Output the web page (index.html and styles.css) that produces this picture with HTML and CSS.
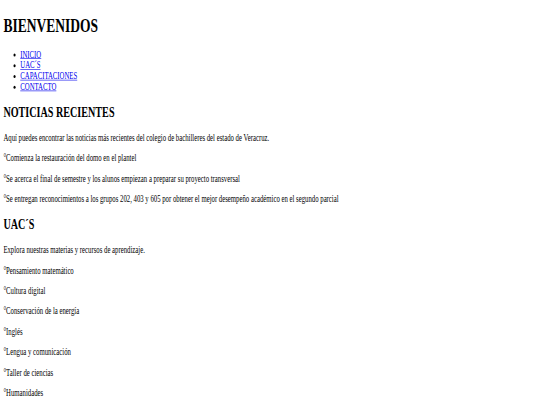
FILE: index.html
```html
<!DOCTYPE html>
<html lang="es">
<head>
<meta charset="utf-8">
<title>Bienvenidos</title>
<link rel="stylesheet" href="styles.css">
</head>
<body>
<div class="page">
<h1>BIENVENIDOS</h1>
<ul class="nav">
<li><a href="#">INICIO</a></li>
<li><a href="#">UAC´S</a></li>
<li><a href="#">CAPACITACIONES</a></li>
<li><a href="#">CONTACTO</a></li>
</ul>
<h2>NOTICIAS RECIENTES</h2>
<p>Aquí puedes encontrar las noticias más recientes del colegio de bachilleres del estado de Veracruz.</p>
<p>°Comienza la restauración del domo en el plantel</p>
<p>°Se acerca el final de semestre y los alunos empiezan a preparar su proyecto transversal</p>
<p>°Se entregan reconocimientos a los grupos 202, 403 y 605 por obtener el mejor desempeño académico en el segundo parcial</p>
<h2>UAC´S</h2>
<p>Explora nuestras materias y recursos de aprendizaje.</p>
<p>°Pensamiento matemático</p>
<p>°Cultura digital</p>
<p>°Conservación de la energía</p>
<p>°Inglés</p>
<p>°Lengua y comunicación</p>
<p>°Taller de ciencias</p>
<p>°Humanidades</p>
</div>
</body>
</html>
```
FILE: styles.css
```css
html, body {
  margin: 0;
  padding: 0;
  background: #ffffff;
  height: 405px;
  overflow: hidden;
}
.page {
  display: flow-root;
  width: 1264px;
  padding: 0 8px;
  font-family: "Liberation Serif", "Times New Roman", serif;
  font-size: 16px;
  color: #000;
  transform: scale(0.4219, 0.6);
  transform-origin: 0 0;
}
.page h1 { font-size: 32px; margin: 24px 0 21.44px; }
.page h2 { font-size: 24px; margin: 19.92px 0; }
.page p { margin: 16px 0; }
.nav { margin: 16px 0; padding-left: 40px; }
.nav a { color: #0000ee; }
```
